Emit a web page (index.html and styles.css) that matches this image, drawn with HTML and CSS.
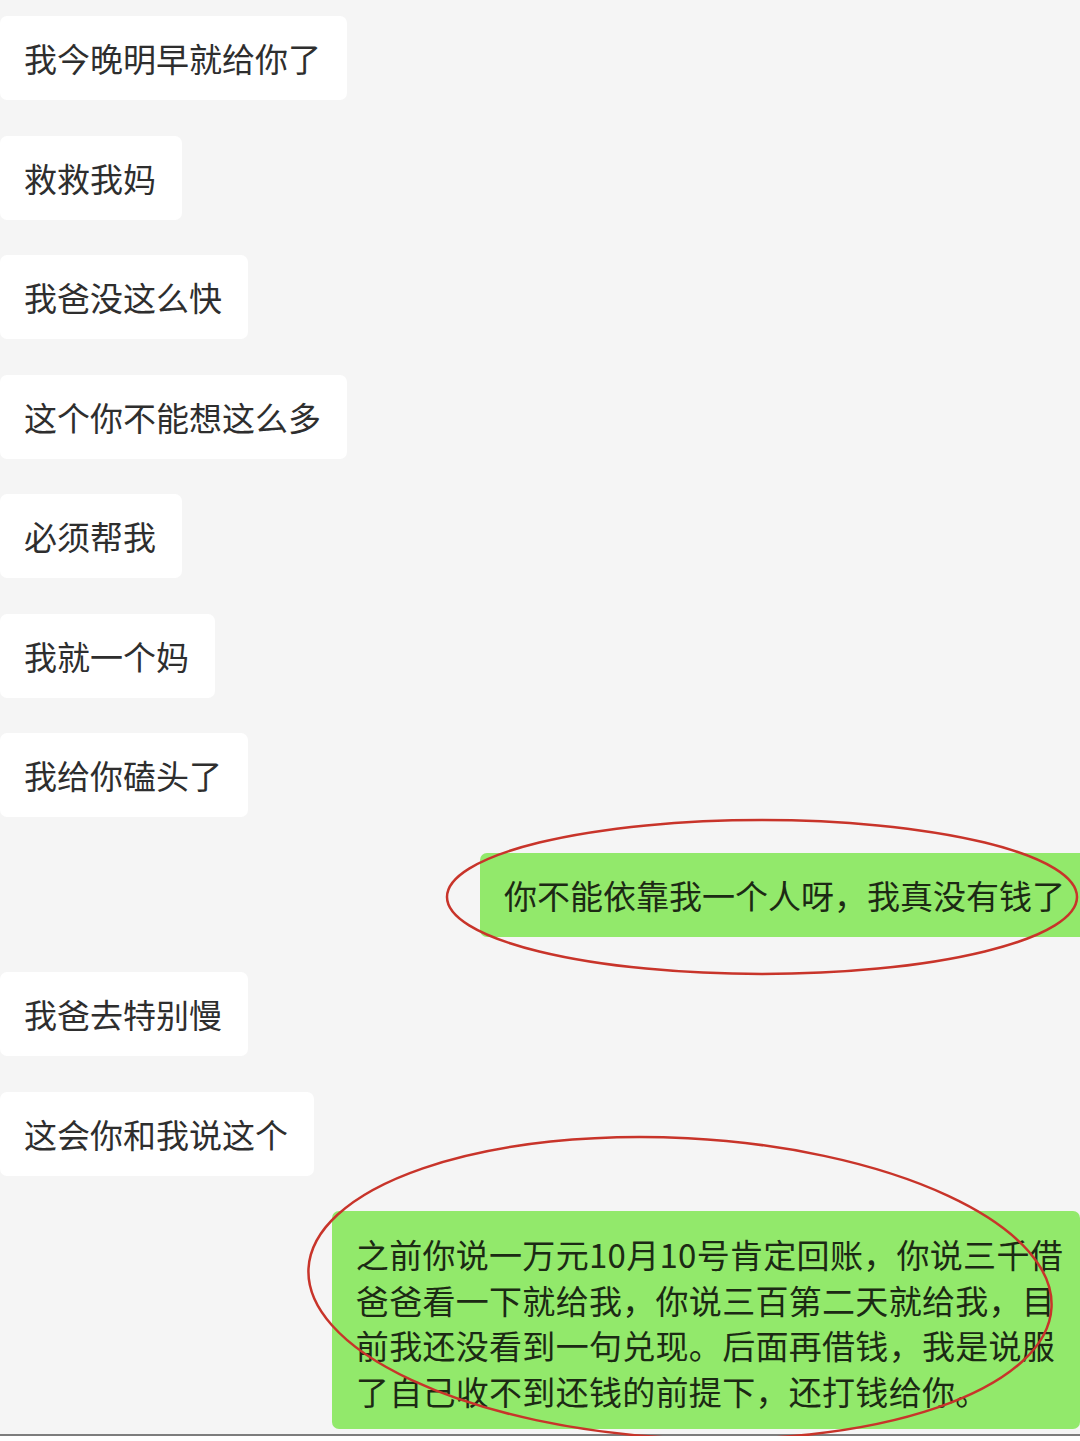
FILE: index.html
```html
<!DOCTYPE html>
<html lang="zh-CN">
<head>
    <meta charset="UTF-8">
    <meta name="viewport" content="width=device-width, initial-scale=1.0">
    <title>聊天记录</title>
    <link rel="stylesheet" href="styles.css">
</head>
<body>
    <main class="chat">
        <div class="row"><div class="bubble">我今晚明早就给你了</div></div>
        <div class="row"><div class="bubble">救救我妈</div></div>
        <div class="row"><div class="bubble">我爸没这么快</div></div>
        <div class="row"><div class="bubble">这个你不能想这么多</div></div>
        <div class="row"><div class="bubble">必须帮我</div></div>
        <div class="row"><div class="bubble">我就一个妈</div></div>
        <div class="row"><div class="bubble">我给你磕头了</div></div>
        <div class="row mine"><div class="bubble green" id="msgOne">你不能依靠我一个人呀，我真没有钱了</div></div>
        <div class="row"><div class="bubble">我爸去特别慢</div></div>
        <div class="row"><div class="bubble">这会你和我说这个</div></div>
        <div class="row mine">
            <div class="bubble green multi" id="msgTwo">
                之前你说一万元10月10号肯定回账，你说三千借<br>
                爸爸看一下就给我，你说三百第二天就给我，目<br>
                前我还没看到一句兑现。后面再借钱，我是说服<br>
                了自己收不到还钱的前提下，还打钱给你。
            </div>
        </div>

        <!-- red marks drawn over the screenshot -->
        <svg class="marks" width="1080" height="1441" viewBox="0 0 1080 1441">
            <ellipse cx="762" cy="897" rx="315" ry="77" />
            <ellipse cx="680" cy="1288" rx="372" ry="150" transform="rotate(3 680 1288)" />
        </svg>
    </main>
</body>
</html>
```

FILE: styles.css
```css
html {
    background-color: #ffffff;
}

body {
    margin: 0;
    overflow: hidden;
    font-family: "Noto Sans CJK SC", "Noto Sans", sans-serif;
}

.chat {
    position: relative;
    display: flex;
    flex-direction: column;
    gap: 35.5px;
    padding: 16px 0 5px 0;
    background-color: #f5f5f5;
    border-bottom: 2px solid #7d7d7d;
}

.row {
    display: flex;
    justify-content: flex-start;
}

.row.mine {
    justify-content: flex-end;
}

.bubble {
    background-color: #ffffff;
    color: #2e2e2e;
    font-size: 33px;
    line-height: 84px;
    padding: 0 26px 0 24px;
    border-radius: 7px;
    white-space: nowrap;
}

.bubble.green {
    background-color: #92e96b;
    color: #1c2a14;
}

#msgOne {
    margin-right: -11px;
}

.bubble.multi {
    line-height: 45.5px;
    padding: 21px 17px 15px 24px;
    letter-spacing: 0.3px;
}

.marks {
    position: absolute;
    left: 0;
    top: 0;
    pointer-events: none;
}

.marks ellipse {
    fill: none;
    stroke: #c8342a;
    stroke-width: 2.5;
}
```
